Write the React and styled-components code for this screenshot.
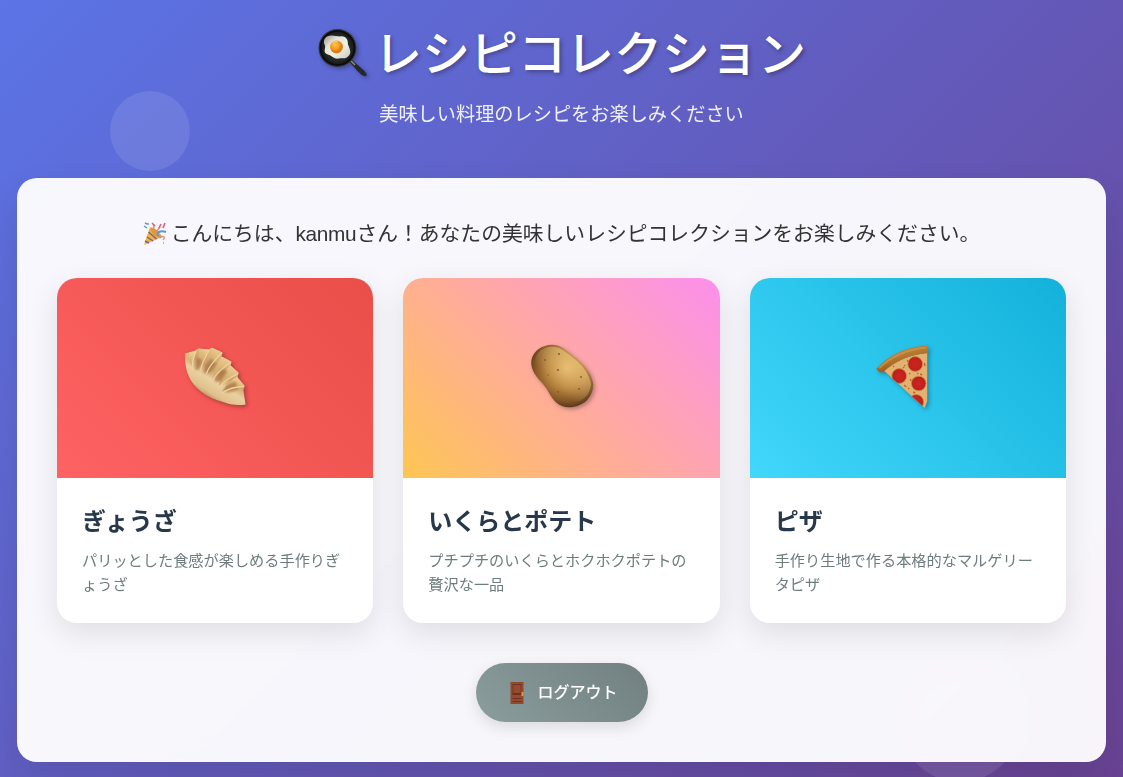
import React from "react";
import styled, { createGlobalStyle } from "styled-components";

const GlobalStyle = createGlobalStyle`
  * { box-sizing: border-box; margin: 0; padding: 0; }
  body {
    min-height: 777px;
    font-family: "Noto Sans CJK JP", "Noto Sans", sans-serif;
    color: #333;
    overflow: hidden;
    background: #667eea;
  }
`;

const Page = styled.div`
  position: relative;
  height: 777px;
  overflow: hidden;
  padding: 20px 17px 15px;
  background: linear-gradient(135deg, #5b74e6 0%, #6a4394 100%);
`;

const Bubble = styled.div`
  position: absolute;
  left: ${(p) => p.$x}px;
  top: ${(p) => p.$y}px;
  width: ${(p) => p.$size}px;
  height: ${(p) => p.$size}px;
  border-radius: 50%;
  background: rgba(255, 255, 255, 0.1);
`;

const Header = styled.header`
  position: relative;
  height: 158px;
  text-align: center;
  color: #fff;
`;

const Title = styled.h1`
  display: flex;
  justify-content: center;
  align-items: center;
  height: 65px;
  font-size: 48px;
  font-weight: 500;
  line-height: 65px;
  text-shadow: 2px 2px 4px rgba(0, 0, 0, 0.3);

  svg {
    width: 50px;
    height: 50px;
    margin-right: 7px;
    filter: drop-shadow(2px 2px 2px rgba(0, 0, 0, 0.3));
  }
`;

const TitleText = styled.span`
  padding-bottom: 5px;
`;

const Subtitle = styled.p`
  margin-top: 14px;
  font-size: 19.2px;
  font-weight: 400;
  line-height: 29px;
  opacity: 0.9;
`;

const Panel = styled.main`
  position: relative;
  height: 584px;
  padding: 40px;
  border-radius: 20px;
  background: rgba(255, 255, 255, 0.95);
  backdrop-filter: blur(10px);
  box-shadow: 0 20px 40px rgba(0, 0, 0, 0.1);
`;

const Greeting = styled.p`
  display: flex;
  justify-content: center;
  align-items: center;
  height: 30px;
  margin-bottom: 30px;
  padding-top: 2px;
  font-family: "Liberation Sans", "Noto Sans CJK JP", sans-serif;
  font-size: 20.8px;
  line-height: 30px;

  svg {
    width: 24px;
    height: 24px;
    margin-right: 4px;
  }
`;

const UserName = styled.span`
  letter-spacing: -0.3px;
`;

const CardGrid = styled.div`
  display: grid;
  grid-template-columns: repeat(3, 1fr);
  gap: 30px;
`;

const Card = styled.article`
  height: 345px;
  overflow: hidden;
  border-radius: 20px;
  background: #fff;
  box-shadow: 0 10px 30px rgba(0, 0, 0, 0.1);
`;

const CardArt = styled.div`
  display: flex;
  align-items: center;
  justify-content: center;
  height: 200px;
  background: ${(p) => p.$background};

  svg {
    width: 70px;
    height: 70px;
    filter: drop-shadow(2px 2px 2px rgba(0, 0, 0, 0.3));
  }
`;

const CardBody = styled.div`
  padding: 24px 25px;
`;

const CardTitle = styled.h3`
  margin-bottom: 9px;
  font-size: 24px;
  font-weight: 700;
  line-height: 36px;
  color: #26384a;
`;

const CardText = styled.p`
  font-size: 15.2px;
  line-height: 24.3px;
  color: #6e7c7d;
  word-break: break-all;
  line-break: anywhere;
`;

const Actions = styled.div`
  display: flex;
  justify-content: center;
  margin-top: 40px;
`;

const LogoutButton = styled.button`
  display: flex;
  align-items: center;
  justify-content: center;
  width: 172px;
  height: 59px;
  padding: 0 0 3px 5px;
  border: 0;
  border-radius: 50px;
  font-family: inherit;
  font-size: 16px;
  font-weight: 500;
  color: #fff;
  background: linear-gradient(45deg, #8b9d9d, #717f80);
  box-shadow: 0 5px 15px rgba(0, 0, 0, 0.12);

  svg {
    width: 14px;
    height: 22px;
    margin-top: 3px;
    margin-right: 13px;
  }
`;

const PanIcon = () => (
  <svg viewBox="-1 -0.5 50 50">
    <defs>
      <radialGradient id="pan"><stop offset=".65" stopColor="#252827" /><stop offset=".87" stopColor="#171918" /><stop offset="1" stopColor="#383b3a" /></radialGradient>
      <radialGradient id="yolk" cx=".4" cy=".35"><stop stopColor="#ffc64c" /><stop offset=".65" stopColor="#f79b1f" /><stop offset="1" stopColor="#dd7d12" /></radialGradient>
      <linearGradient id="egg" x2="1" y2="1"><stop stopColor="#96918b" /><stop offset=".3" stopColor="#e5e3d8" /><stop offset=".6" stopColor="#f1f1e8" /><stop offset="1" stopColor="#c5c9b8" /></linearGradient>
    </defs>
    <path d="M31 33 34 31.5 46 42Q50 46 48 47.5 45 48.5 40 43Z" fill="#272827" />
    <path d="m33 32.5 4 4" stroke="#8b8e8b" strokeWidth="1.5" />
    <circle cx="19.5" cy="19.5" r="19" fill="url(#pan)" />
    <circle cx="19.5" cy="19.5" r="17" fill="none" stroke="#090a09" strokeWidth="1.4" />
    <path d="M9 8C14 6 18 8 22 8 28 7 30 11 30 16 32 21 34 25 30 28 27 31 24 29 21 30 16 31 14 27 10 26 4 24 8 20 7 17 5 13 6 10 9 8Z" fill="url(#egg)" />
    <circle cx="18.5" cy="18.5" r="6.4" fill="url(#yolk)" />
    <path d="M14.5 15.5q2-3 5-2.5" fill="none" stroke="#ffdf87" strokeWidth="1" />
  </svg>
);

const PartyIcon = () => (
  <svg viewBox="0 0 24 24">
    <path d="M1 23 7 5Q16 7 19 15Z" fill="#f0b832" />
    <path d="m5.5 10 8 7M4 15l6 4M2 19l4 2" stroke="#8054a9" strokeWidth="1.5" />
    <ellipse cx="12" cy="10.5" rx="2.5" ry="6" transform="rotate(-42 12 10.5)" fill="#d99b32" />
    <path d="m10 10 1-7M13 10l4-5" stroke="#e78a78" strokeWidth="1.6" />
    <path d="M14 11q4-3 9-1" fill="none" stroke="#5a96d6" strokeWidth="1.9" />
    <path d="m9 1 3 3M16 6l2-4M22 1l-2 5" fill="none" stroke="#dc6079" strokeWidth="1.6" />
    <path d="m1 4 3 2M2 1l2 1M5 3V1M14 12l4 4" stroke="#688ed0" strokeWidth="1.4" />
    <path d="M17 15q3-1 4 0 1 1-1 3M20 21h1M16 16l2-3" fill="none" stroke="#dc9275" strokeWidth="1.4" />
  </svg>
);

const GyozaIcon = () => (
  <svg viewBox="0.5 0.5 70 70">
    <defs>
      <linearGradient id="dough" x1=".75" y1=".15" x2=".3" y2=".85"><stop stopColor="#e4bd80" /><stop offset=".42" stopColor="#cba06b" /><stop offset=".62" stopColor="#ead0a0" /><stop offset=".85" stopColor="#e0c18d" /><stop offset="1" stopColor="#b88c58" /></linearGradient>
      <linearGradient id="foldLight" x1=".7" y1="0" x2=".2" y2="1"><stop stopColor="#efd296" /><stop offset=".6" stopColor="#d9b174" /><stop offset="1" stopColor="#d5ad75" /></linearGradient>
      <filter id="foldShade"><feGaussianBlur stdDeviation="1.3" /></filter>
      <clipPath id="gyozaShape"><path d="M5.5 11 16 8 18 6 30 7 32 5 43 10 42 14 52 19 51 23 59 30 58 35 65 43 64 48 66 62Q55 64 42 59 27 55 17 45C8 36 5 24 5.5 11Z" /></clipPath>
    </defs>
    <path d="M5.5 11 16 8 18 6 30 7 32 5 43 10 42 14 52 19 51 23 59 30 58 35 65 43 64 48 66 62Q55 64 42 59 27 55 17 45C8 36 5 24 5.5 11Z" fill="url(#dough)" />
    <g clipPath="url(#gyozaShape)">
      <g fill="url(#foldLight)">
        <path d="M5 11 17 8Q13 16 13 25 9 17 5 11Z" /><path d="M19 5 31 6Q24 15 21 24 18 15 19 5Z" /><path d="M33 4 43 10Q34 18 28 25 27 17 33 4Z" /><path d="M43 13 52 20Q41 27 33 36 34 26 43 13Z" /><path d="M51 22 60 31Q49 37 39 44 41 33 51 22Z" /><path d="M58 34 66 44Q53 45 43 50 47 40 58 34Z" />
      </g>
      <g fill="#9c663a" opacity=".6" filter="url(#foldShade)">
        <path d="M18 15Q15 21 16 28L20 26 23 18Z" /><path d="M31 16Q25 22 24 30L30 31 37 21Z" /><path d="M43 26Q36 31 35 39L41 39 48 29Z" /><path d="M56 39Q47 41 43 49L50 50 59 47Z" />
      </g>
      <path d="M17 8Q12 18 13 28M31 6Q22 20 21 28M43 10Q30 22 27 31M52 20Q38 28 33 38M60 31Q46 36 38 46M65 44Q51 44 42 51" fill="none" stroke="#efd39b" strokeWidth="1.3" />
    </g>
  </svg>
);

const PotatoIcon = () => (
  <svg viewBox="-1 2 70 70">
    <defs>
      <radialGradient id="potato" cx=".58" cy=".38" r=".65"><stop stopColor="#e2b566" /><stop offset=".5" stopColor="#b88540" /><stop offset=".8" stopColor="#855626" /><stop offset="1" stopColor="#4c3015" /></radialGradient>
      <linearGradient id="potatoLight" x1="0" y1="1" x2="1" y2="0"><stop offset=".35" stopColor="#f2cf87" stopOpacity="0" /><stop offset=".75" stopColor="#f2cf87" stopOpacity=".55" /><stop offset="1" stopColor="#9a672d" stopOpacity="0" /></linearGradient>
    </defs>
    <path d="M18 5C29 1 37 7 45 14C56 22 64 31 66 42C67 54 59 64 46 66C33 68 26 60 21 50C17 42 8 37 5 27C2 17 8 8 18 5Z" fill="url(#potato)" />
    <path d="M18 7C29 3 37 9 45 16C56 24 62 33 64 43C63 53 57 60 46 62C35 61 29 54 24 46C18 38 10 34 8 25C7 17 11 10 18 7Z" fill="url(#potatoLight)" />
    <g fill="#8a562a"><circle cx="32" cy="13" r="1" /><circle cx="18" cy="19" r=".9" /><circle cx="31" cy="29" r="1" /><circle cx="54" cy="36" r=".9" /><circle cx="52" cy="48" r=".9" /><circle cx="31" cy="51" r="1" /><circle cx="21" cy="34" r=".7" /></g>
  </svg>
);

const PizzaIcon = () => (
  <svg viewBox="-2.2 2 70 70">
    <defs>
      <linearGradient id="crust" x2=".5" y2="1"><stop stopColor="#c88b41" /><stop offset=".5" stopColor="#b67930" /><stop offset="1" stopColor="#935018" /></linearGradient>
      <radialGradient id="pepperoni"><stop stopColor="#c92722" /><stop offset=".75" stopColor="#c51f1b" /><stop offset="1" stopColor="#a52a1b" /></radialGradient>
      <clipPath id="slice"><path d="M8 29Q28 14 52 12V60L49.5 67Z" /></clipPath>
    </defs>
    <path d="M8 29Q28 14 52 12V60L49.5 67Z" fill="#e2b273" />
    <g clipPath="url(#slice)"><path d="m18 25 1 1m5 5 1 1m7-13 1 2m16 1 1 3M29 44l2 2m4-8 1 2m2 11 2 1m5-19 2 1m-1 22 1 2M29 24l1 1m4 7 1 1m-2 14 1 1m8-16 1 1m-15-7 1 1" stroke="#c26530" strokeWidth="1.5" />
      <g fill="url(#pepperoni)" stroke="#d48945" strokeWidth=".8"><circle cx="40" cy="23" r="7.4" /><circle cx="24" cy="35" r="7.4" /><circle cx="43.5" cy="42.5" r="7.3" /><circle cx="41" cy="61" r="7.4" /></g>
    </g>
    <path d="M1 28Q20 7 50 4.5Q53 4 53 12 27 14 8 31Q5 33 1 28Z" fill="url(#crust)" />
    <path d="M4 27Q23 9 51 6.5" fill="none" stroke="#cf9950" strokeWidth="2" opacity=".7" />
  </svg>
);

const DoorIcon = () => (
  <svg viewBox="-0.5 0 14 22">
    <path d="M0 0h13v22H0Z" fill="#91472a" />
    <path d="M1 1h11v20H1Z" fill="#964a2e" />
    <path d="M2 2h9v1H2ZM2 11h9v2H2ZM2 16h9v1H2ZM2 19h9v1H2Z" fill="#6c321f" />
    <path d="M2 3h1v8H2ZM10 3h1v8h-1Z" fill="#7d3b24" />
    <path d="M11 10h2v4h-2Z" fill="#caa244" />
  </svg>
);

const recipes = [
  { title: "ぎょうざ", text: "パリッとした食感が楽しめる手作りぎょうざ", Icon: GyozaIcon, background: "linear-gradient(45deg, #ff6263, #e94e48)" },
  { title: "いくらとポテト", text: "プチプチのいくらとホクホクポテトの贅沢な一品", Icon: PotatoIcon, background: "linear-gradient(45deg, #fdc653, #ffaf91 40%, #fc8fee)" },
  { title: "ピザ", text: "手作り生地で作る本格的なマルゲリータピザ", Icon: PizzaIcon, background: "linear-gradient(45deg, #42d7fb, #13b1da)" },
];

export default function App() {
  return (
    <>
      <GlobalStyle />
      <Page>
        <Bubble $x={110} $y={91} $size={80} />
        <Bubble $x={900} $y={662} $size={120} />
        <Header>
          <Title><PanIcon /><TitleText>レシピコレクション</TitleText></Title>
          <Subtitle>美味しい料理のレシピをお楽しみください</Subtitle>
        </Header>
        <Panel>
          <Greeting>
            <PartyIcon />
            <span>こんにちは、<UserName>kanmu</UserName>さん！あなたの美味しいレシピコレクションをお楽しみください。</span>
          </Greeting>
          <CardGrid>
            {recipes.map(({ title, text, Icon, background }) => (
              <Card key={title}>
                <CardArt $background={background}><Icon /></CardArt>
                <CardBody>
                  <CardTitle>{title}</CardTitle>
                  <CardText>{text}</CardText>
                </CardBody>
              </Card>
            ))}
          </CardGrid>
          <Actions>
            <LogoutButton><DoorIcon />ログアウト</LogoutButton>
          </Actions>
        </Panel>
      </Page>
    </>
  );
}
